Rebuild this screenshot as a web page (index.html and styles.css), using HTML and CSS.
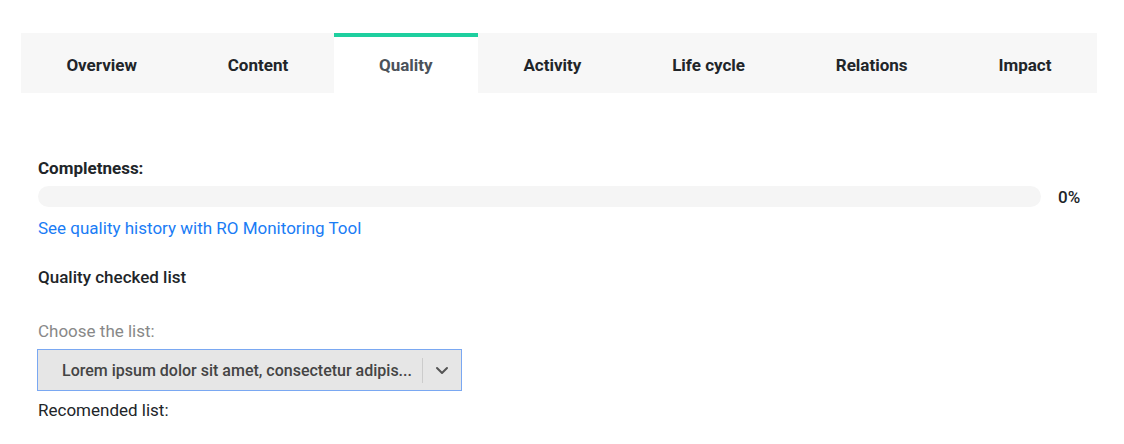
FILE: index.html
```html
<!DOCTYPE html>
<html>
<head>
<meta charset="utf-8">
<link rel="stylesheet" href="styles.css">
</head>
<body>
<div class="page">
  <nav class="tabs">
    <div class="tab">Overview</div>
    <div class="tab">Content</div>
    <div class="tab active">Quality</div>
    <div class="tab">Activity</div>
    <div class="tab">Life cycle</div>
    <div class="tab">Relations</div>
    <div class="tab">Impact</div>
  </nav>
  <section class="content">
    <div class="label-bold">Completness:</div>
    <div class="progress-row">
      <div class="progress"><div class="progress-fill" style="width:0%"></div></div>
      <div class="pct">0%</div>
    </div>
    <a class="link" href="#">See quality history with RO Monitoring Tool</a>
    <div class="sub-title">Quality checked list</div>
    <div class="muted">Choose the list:</div>
    <div class="select">
      <span class="select-text">Lorem ipsum dolor sit amet, consectetur adipis...</span>
      <span class="sep"></span>
      <span class="chev"><svg width="14" height="9" viewBox="0 0 14 9"><path d="M2 2l5 5 5-5" fill="none" stroke="#555" stroke-width="2" stroke-linecap="round" stroke-linejoin="round"/></svg></span>
    </div>
    <div class="plain">Recomended list:</div>
  </section>
</div>
</body>
</html>
```
FILE: styles.css
```css
* { box-sizing: border-box; }
body { margin: 0; background: #fff; font-family: Roboto, "Liberation Sans", sans-serif; color: #212529; }
.page { padding: 33px 0 0 21px; width: 1124px; }
.tabs { display: flex; width: 1076px; height: 60px; background: #f7f7f7; }
.tab { padding: 4px 45.4px 0; display: flex; align-items: center; justify-content: center; font-size: 17px; font-weight: 700; color: #212529; flex: 0 0 auto; }
.tab:last-child { flex: 1 1 auto; }
.tab.active { background: #fff; border-top: 4px solid #1ecf9f; color: #4b525a; padding-top: 0; }
.content { padding: 0 0 0 17px; }
.label-bold { margin-top: 64px; font-size: 17px; font-weight: 700; line-height: 22px; }
.progress-row { display: flex; align-items: center; margin-top: 7px; }
.progress { width: 1003px; height: 21px; background: #f5f5f5; border-radius: 11px; overflow: hidden; }
.progress-fill { height: 100%; background: #1ecf9f; }
.pct { margin-left: 17px; font-size: 17px; font-weight: 500; }
.link { display: block; margin-top: 10px; color: #1a7cf5; text-decoration: none; font-size: 17px; line-height: 22px; }
.sub-title { margin-top: 27px; font-size: 17px; font-weight: 500; line-height: 22px; }
.muted { margin-top: 32px; font-size: 17px; color: #888; line-height: 22px; }
.select { margin-top: 7px; margin-left: -1px; width: 425px; height: 42px; background: #e6e6e6; border: 1px solid #7aa8f2; display: flex; align-items: center; }
.select-text { padding-left: 24px; flex: 1; font-size: 16px; font-weight: 500; color: #444; white-space: nowrap; overflow: hidden; }
.sep { width: 1px; height: 25px; background: #ccc; }
.chev { width: 38px; display: flex; justify-content: center; align-items: center; }
.plain { margin-top: 8px; font-size: 17px; line-height: 22px; color: #212529; }
```
